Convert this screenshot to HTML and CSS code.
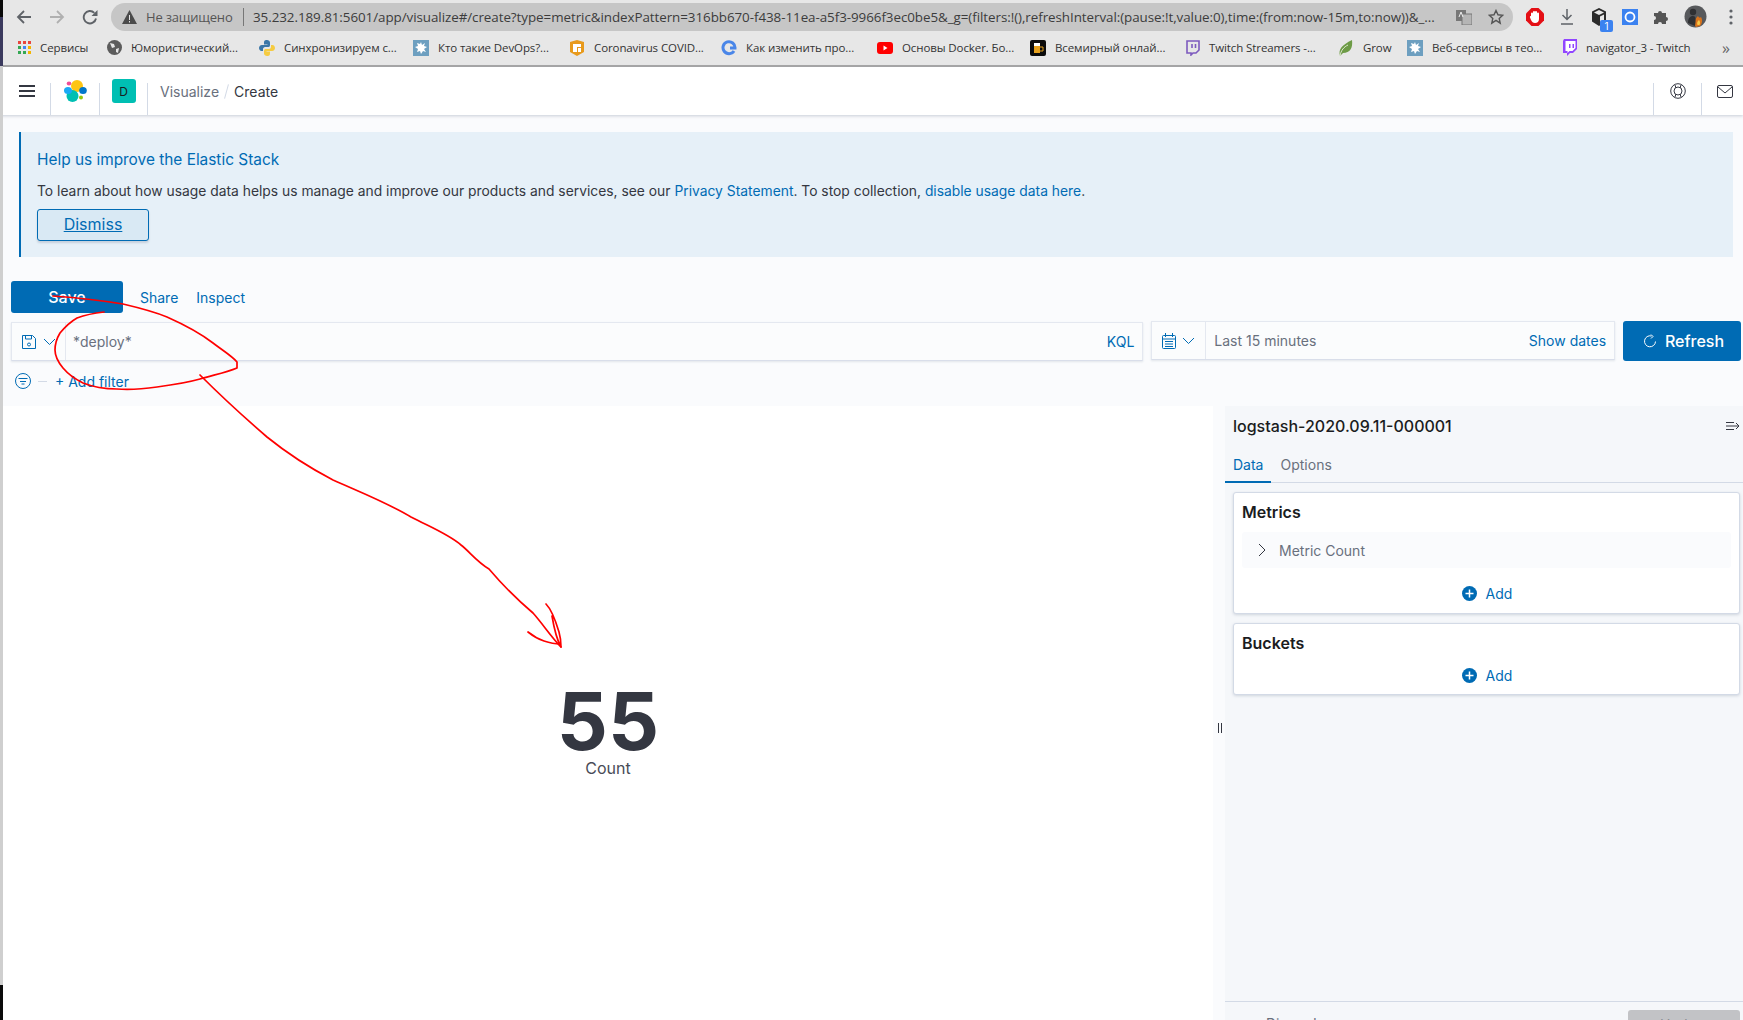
FILE: index.html
```html
<!DOCTYPE html>
<html lang="en">
<head>
    <meta charset="UTF-8">
    <title>Visualize - Kibana</title>
    <link rel="stylesheet" href="styles.css">
</head>
<body>
<div class="browser-bar">
    <div class="nav-btn">
        <svg width="16" height="16" viewBox="0 0 16 16" fill="none" stroke="#5f6368" stroke-width="1.800"><path d="M15 8H2M8 2L2 8l6 6"/></svg>
    </div>
    <div class="nav-btn nav-forward">
        <svg width="16" height="16" viewBox="0 0 16 16" fill="none" stroke="#b0b0b0" stroke-width="1.800"><path d="M1 8h13M8 2l6 6-6 6"/></svg>
    </div>
    <div class="nav-btn nav-reload">
        <svg width="16" height="16" viewBox="0 0 16 16" fill="none" stroke="#5f6368" stroke-width="1.900"><path d="M14 9.500A6.200 6.200 0 1 1 12.300 3.800"/><path d="M15.500 1v6H9.500z" fill="#5f6368" stroke="none"/></svg>
    </div>
    <div class="address-bar">
        <svg class="warn-icon" width="15" height="14" viewBox="0 0 15 14"><path d="M7.500 0L15 14H0z" fill="#4a4a4a"/><path d="M7 5h1v5H7zM7 11h1v1.500H7z" fill="#e4e4e4"/></svg>
        <span class="not-secure">Не защищено</span>
        <span class="address-url">35.232.189.81:5601/app/visualize#/create?type=metric&amp;indexPattern=316bb670-f438-11ea-a5f3-9966f3ec0be5&amp;_g=(filters:!(),refreshInterval:(pause:!t,value:0),time:(from:now-15m,to:now))&amp;_...</span>
        <svg class="translate-icon" width="16" height="16" viewBox="0 0 16 16"><rect x="0" y="1" width="10" height="11" fill="#777"/><rect x="6" y="5" width="10" height="11" fill="#b5b5b5" stroke="#777"/><path d="M3 8l2-5 2 5" stroke="#eee" fill="none"/></svg>
        <svg class="star-icon" width="16" height="16" viewBox="0 0 16 16" fill="none" stroke="#555" stroke-width="1.400"><path d="M8 1.500l2 4.300 4.700.5-3.500 3.200 1 4.600L8 11.300l-4.200 2.800 1-4.600L1.300 6.300 6 5.800z"/></svg>
    </div>
    <div class="ext-icons">
        <svg width="18" height="18" viewBox="0 0 18 18"><path d="M5.500 0h7L18 5.500v7L12.500 18h-7L0 12.500v-7z" fill="#e40f15"/><path d="M5 8V5.500a1 1 0 0 1 2 0V4a1 1 0 0 1 2 0 1 1 0 0 1 2 0v1.500a1 1 0 0 1 2 0V11c0 2.500-1.500 4-4 4-2 0-3-1-4-3L4 9.500c-.5-1 .5-1.800 1-1.500z" fill="#fff"/></svg>
        <svg width="16" height="18" viewBox="0 0 16 18" fill="none" stroke="#5f6368" stroke-width="1.500"><path d="M8 1v10M3.500 7L8 11.500 12.500 7M2 16h12"/></svg>
        <div class="ext-box">
            <svg width="16" height="18" viewBox="0 0 16 18"><path d="M8 0l7 3.500v10L8 18l-7-4.500v-10z" fill="#2b2b2b"/><path d="M8 2L3 4.500 8 7l5-2.500z" fill="#e7e7e7"/><path d="M9 8.500v6l4-2.500V6.500z" fill="#e7e7e7"/></svg>
            <span class="ext-badge">1</span>
        </div>
        <svg width="16" height="16" viewBox="0 0 16 16"><rect width="16" height="16" fill="#3b82f0"/><circle cx="8" cy="8" r="4.500" fill="none" stroke="#fff" stroke-width="1.800"/></svg>
        <svg width="16" height="16" viewBox="0 0 16 16"><path d="M1 4h4a2 2 0 0 1 4 0h4v4a2 2 0 0 1 0 4v3H9a2 2 0 0 0-4 0H1v-4a2 2 0 0 0 0-4z" fill="#555"/></svg>
        <svg width="23" height="23" viewBox="0 0 23 23"><circle cx="11.500" cy="11.500" r="11" fill="#57595c"/><path d="M12 22c-3-3-2-7 2-11 1 2 2 2 3 1 2 3 1 7-1 9z" fill="#d9731c"/><path d="M13.500 20c-1-2 0-4 1.500-5 1 1 1.500 3 .5 5z" fill="#f7c948"/><circle cx="9" cy="7" r="3.200" fill="#2f3033"/><path d="M4 18c0-5 2-7 5-7s3 3 2 10z" fill="#2f3033"/></svg>
        <svg class="dots-icon" width="4" height="16" viewBox="0 0 4 16" fill="#5f6368"><circle cx="2" cy="2" r="1.600"/><circle cx="2" cy="8" r="1.600"/><circle cx="2" cy="14" r="1.600"/></svg>
    </div>
</div>

<div class="bookmarks">
    <div class="bookmark">
        <svg width="13" height="13" viewBox="0 0 13 13"><path d="M0 0h3v3H0zM5 0h3v3H5zM10 0h3v3h-3z" fill="#e8453c"/><path d="M0 5h3v3H0z" fill="#34a853"/><path d="M5 5h3v3H5z" fill="#4285f4"/><path d="M10 5h3v3h-3z" fill="#f4b400"/><path d="M0 10h3v3H0zM5 10h3v3H5z" fill="#34a853"/><path d="M10 10h3v3h-3z" fill="#f4b400"/></svg>
        <span class="bm-text">Сервисы</span>
    </div>
    <div class="bookmark">
        <svg width="15" height="15" viewBox="0 0 15 15"><circle cx="7.500" cy="7.500" r="7.500" fill="#5c5c5c"/><path d="M3 3l4 1 1 3-3 1zM9 9l3-1-1 5-2-1z" fill="#e6e6e6"/></svg>
        <span class="bm-text">Юмористический...</span>
    </div>
    <div class="bookmark">
        <svg width="16" height="16" viewBox="0 0 16 16"><path d="M8 0C5 0 5 1.500 5 3v1.500h3.500V5H3C1 5 0 6.500 0 8s1 3 2.500 3H4V9c0-1 1-2 2-2h3.500C10.500 7 11 6 11 5V2.500C11 1 9.500 0 8 0z" fill="#3b77a8"/><path d="M8 16c3 0 3-1.500 3-3v-1.500H7.500V11H13c2 0 3-1.500 3-3s-1-3-2.500-3H12v2c0 1-1 2-2 2H6.500C5.500 9 5 10 5 11v2.500C5 15 6.500 16 8 16z" fill="#f5cb41"/></svg>
        <span class="bm-text">Синхронизируем с...</span>
    </div>
    <div class="bookmark">
        <svg width="16" height="16" viewBox="0 0 16 16"><rect width="16" height="16" fill="#6d9fc0"/><path d="M8 2l1 3 3-2-1 3 3 1-3 2 2 3-3-1-2 3-1-3-3 1 1-3-3-2 3-1-1-3 3 1z" fill="#fff"/></svg>
        <span class="bm-text">Кто такие DevOps?...</span>
    </div>
    <div class="bookmark">
        <svg width="16" height="16" viewBox="0 0 16 16"><path d="M1 2l7-2 7 2v10l-7 4-7-4z" fill="#e89a1c"/><path d="M4 4h8v3H8v5H4z" fill="#fff"/><path d="M9 8h3v4H9z" fill="#fff"/></svg>
        <span class="bm-text">Coronavirus COVID...</span>
    </div>
    <div class="bookmark">
        <svg width="16" height="16" viewBox="0 0 16 16" fill="none"><path d="M13 11A6 6 0 1 1 14 8H9" stroke="#4a86e8" stroke-width="3"/></svg>
        <span class="bm-text">Как изменить про...</span>
    </div>
    <div class="bookmark">
        <svg width="16" height="12" viewBox="0 0 16 12"><rect width="16" height="12" rx="3" fill="#f00"/><path d="M6.500 3.500v5l4-2.500z" fill="#fff"/></svg>
        <span class="bm-text">Основы Docker. Бо...</span>
    </div>
    <div class="bookmark">
        <svg width="16" height="16" viewBox="0 0 16 16"><rect width="16" height="16" rx="2" fill="#0c0c0c"/><path d="M4 6h6v7H4z" fill="#e7a11d"/><path d="M4 3h6v3H4z" fill="#fff"/><path d="M10 7h3v4h-3" fill="none" stroke="#e7a11d"/></svg>
        <span class="bm-text">Всемирный онлай...</span>
    </div>
    <div class="bookmark">
        <svg width="14" height="16" viewBox="0 0 14 16" fill="none" stroke="#7d5bbe" stroke-width="1.600"><path d="M1 1h12v9l-3 3H7l-2 2v-2H1zM6 4v4M9.500 4v4"/></svg>
        <span class="bm-text">Twitch Streamers -...</span>
    </div>
    <div class="bookmark">
        <svg width="16" height="18" viewBox="0 0 16 18"><path d="M2 17C0 10 4 6 14 1c1 8-2 13-9 13z" fill="#6d9b46"/><path d="M2 17C3 11 6 8 10 6" stroke="#dfe8d2" fill="none"/></svg>
        <span class="bm-text">Grow</span>
    </div>
    <div class="bookmark">
        <svg width="16" height="16" viewBox="0 0 16 16"><rect width="16" height="16" fill="#6d9fc0"/><path d="M8 2l1 3 3-2-1 3 3 1-3 2 2 3-3-1-2 3-1-3-3 1 1-3-3-2 3-1-1-3 3 1z" fill="#fff"/></svg>
        <span class="bm-text">Веб-сервисы в тео...</span>
    </div>
    <div class="bookmark">
        <svg width="15" height="17" viewBox="0 0 15 17"><path d="M2 0h13v10l-4 4H8l-3 3v-3H1V2z" fill="#9146ff"/><path d="M3.500 2h10v7l-3 3h-3l-2 2v-2h-2z" fill="#fff"/><path d="M7 5h1.500v4H7zM10.500 5H12v4h-1.500z" fill="#9146ff"/></svg>
        <span class="bm-text">navigator_3 - Twitch</span>
    </div>
    <span class="bm-more">»</span>
</div>

<div class="app">
    <header class="kbn-header">
        <div class="hd-cell hd-menu">
            <svg width="16" height="12" viewBox="0 0 16 12" fill="#343741"><rect y="0" width="16" height="2"/><rect y="5" width="16" height="2"/><rect y="10" width="16" height="2"/></svg>
        </div>
        <div class="hd-cell hd-logo">
            <svg width="24" height="24" viewBox="0 0 24 24">
                <circle cx="13" cy="7" r="6" fill="#fec514"/>
                <circle cx="8.500" cy="17" r="6" fill="#00bfb3"/>
                <ellipse cx="4" cy="11.500" rx="4" ry="3.500" fill="#1ba9f5"/>
                <ellipse cx="5" cy="4.500" rx="2.300" ry="2" fill="#f04e98"/>
                <ellipse cx="19" cy="11.500" rx="3.800" ry="3.500" fill="#0077cc"/>
                <circle cx="17" cy="18.500" r="2" fill="#93c90e"/>
            </svg>
        </div>
        <div class="hd-cell hd-space">
            <span class="space-avatar">D</span>
        </div>
        <nav class="crumbs">
            <span class="crumb-link">Visualize</span>
            <span class="crumb-sep"></span>
            <span class="crumb-last">Create</span>
        </nav>
        <div class="hd-cell hd-right">
            <svg width="16" height="16" viewBox="0 0 16 16" fill="none" stroke="#343741"><circle cx="8" cy="8" r="7.300"/><circle cx="8" cy="8" r="4"/><path d="M5 2l1 3M11 2l-1 3M5 14l1-3M11 14l-1-3"/></svg>
        </div>
        <div class="hd-cell hd-right">
            <svg width="16" height="13" viewBox="0 0 16 13" fill="none" stroke="#343741"><rect x=".5" y=".5" width="15" height="12" rx="1.500"/><path d="M1 2l7 6 7-6"/></svg>
        </div>
    </header>

    <section class="banner">
        <h3 class="banner-title">Help us improve the Elastic Stack</h3>
        <p class="banner-text">To learn about how usage data helps us manage and improve our products and services, see our <a class="link">Privacy Statement</a>. To stop collection, <a class="link">disable usage data here</a>.</p>
        <button type="button" class="dismiss-btn">Dismiss</button>
    </section>

    <div class="top-menu">
        <button type="button" class="save-btn">Save</button>
        <a class="link menu-link">Share</a>
        <a class="link menu-link">Inspect</a>
    </div>

    <div class="query-row">
        <div class="query-bar">
            <div class="prepend">
                <svg width="14" height="14" viewBox="0 0 14 14" fill="none" stroke="#006bb4"><path d="M.5.500h10l3 3v10H.5z"/><path d="M3.500.500v3.500h6v-3.500"/><circle cx="7" cy="9.500" r="1.500"/></svg>
                <svg class="chev" width="13" height="8" viewBox="0 0 13 8" fill="none" stroke="#006bb4"><path d="M1 1l5.500 5.500L12 1"/></svg>
            </div>
            <span class="query-text">*deploy*</span>
            <a class="link kql">KQL</a>
        </div>
        <div class="date-bar">
            <div class="prepend date-prepend">
                <svg width="14" height="16" viewBox="0 0 14 16" fill="none" stroke="#006bb4"><rect x=".5" y="2.500" width="13" height="13" rx="1"/><path d="M.5 6h13M3.500 0v4M10.500 0v4M3 8.500h8M3 11h8M3 13.500h8" /></svg>
                <svg class="chev" width="13" height="8" viewBox="0 0 13 8" fill="none" stroke="#006bb4"><path d="M1 1l5.500 5.500L12 1"/></svg>
            </div>
            <span class="date-text">Last 15 minutes</span>
            <a class="link show-dates">Show dates</a>
        </div>
        <button type="button" class="refresh-btn">
            <svg width="14" height="14" viewBox="0 0 14 14" fill="none" stroke="#fff"><path d="M12.500 7.500A5.500 5.500 0 1 1 8.500 2"/><path d="M8 .5l2 2-2 2"/></svg>
            Refresh
        </button>
    </div>

    <div class="filter-row">
        <svg width="16" height="16" viewBox="0 0 16 16" fill="none" stroke="#006bb4"><circle cx="8" cy="8" r="7.500"/><path d="M3.500 5.500h9M5 8.500h6M6.500 11h3"/></svg>
        <span class="filter-dash"></span>
        <a class="link add-filter">+ Add filter</a>
    </div>

    <main class="workspace">
        <div class="chart">
            <div class="metric-value">55</div>
            <div class="metric-label">Count</div>
        </div>
        <div class="resizer"><span class="resizer-grip"></span></div>
        <aside class="side-panel">
            <div class="panel-head">
                <span class="index-name">logstash-2020.09.11-000001</span>
                <svg width="14" height="12" viewBox="0 0 14 12" fill="none" stroke="#343741"><path d="M0 2.500h8M0 6h13M0 9.500h8M10 3l3 3-3 3"/></svg>
            </div>
            <div class="tabs">
                <span class="tab tab-active">Data</span>
                <span class="tab">Options</span>
            </div>
            <div class="panel-body">
                <div class="card card-metrics">
                    <h4 class="card-title">Metrics</h4>
                    <div class="agg-row">
                        <svg width="8" height="14" viewBox="0 0 8 14" fill="none" stroke="#343741"><path d="M1 1l6 6-6 6"/></svg>
                        <span class="agg-name">Metric Count</span>
                    </div>
                    <div class="add-row">
                        <svg width="15" height="15" viewBox="0 0 15 15"><circle cx="7.500" cy="7.500" r="7.500" fill="#006bb4"/><path d="M3.500 7.500h8M7.500 3.500v8" stroke="#fff" stroke-width="1.500"/></svg>
                        <a class="link">Add</a>
                    </div>
                </div>
                <div class="card card-buckets">
                    <h4 class="card-title">Buckets</h4>
                    <div class="add-row add-row-tight">
                        <svg width="15" height="15" viewBox="0 0 15 15"><circle cx="7.500" cy="7.500" r="7.500" fill="#006bb4"/><path d="M3.500 7.500h8M7.500 3.500v8" stroke="#fff" stroke-width="1.500"/></svg>
                        <a class="link">Add</a>
                    </div>
                </div>
            </div>
            <div class="panel-foot">
                <span class="discard">Discard</span>
                <button type="button" class="update-btn">Update</button>
            </div>
        </aside>
    </main>
</div>

<!-- sliver of the window behind, down the left edge of the screenshot -->
<div class="window-edge">
    <span class="edge-top"></span>
    <span class="edge-navy"></span>
    <span class="edge-grey"></span>
    <span class="edge-bottom"></span>
</div>

<!-- red pen marks drawn over the screenshot -->
<svg class="scribble" width="1743" height="1020" viewBox="0 0 1743 1020" fill="none" stroke="#f00" stroke-width="1.700" stroke-linecap="round" stroke-linejoin="round">
    <path d="M53 296C80 298 105 301 123 304C140 308 155 312 167 317C185 325 200 333 213 343C222 350 232 356 237 362L237 368C225 373 213 375 200 379C186 383 172 385 157 387C143 389 130 390 117 389C105 389 93 387 83 383C75 379 68 374 63 368C58 362 55 356 55 350C55 344 57 338 60 333C65 327 70 322 77 318C85 315 95 313 104 312"/>
    <path d="M200 375C220 395 245 418 267 437C288 454 310 468 333 480C360 492 388 503 411 517C430 527 448 534 461 545C470 552 476 561 489 569C500 582 520 602 533 613C542 623 552 638 561 647"/>
    <path d="M546 604C552 610 556 622 559 632C561 639 561 644 561 647C557 640 554 628 552 616"/>
    <path d="M528 632C533 636 538 639 544 641C550 643 556 644 560 644"/>
</svg>
</body>
</html>
```

FILE: styles.css
```css
* {
    box-sizing: border-box;
}
html, body {
    margin: 0;
    height: 1020px;
    overflow: hidden;
}
body {
    position: relative;
    font-family: Inter, "Liberation Sans", sans-serif;
    font-size: 14px;
    color: #343741;
    background: #fff;
}
h3, h4, p {
    margin: 0;
}
button {
    font-family: inherit;
}
.link {
    color: #006bb4;
}

/* browser chrome */
.browser-bar {
    display: flex;
    align-items: center;
    height: 33px;
    padding-left: 16px;
    background: #e7e7e7;
}
.nav-btn {
    display: flex;
    width: 16px;
    margin-right: 17px;
}
.nav-reload {
    margin-right: 13px;
}
.address-bar {
    display: flex;
    align-items: center;
    width: 1402px;
    height: 28px;
    padding: 0 10px 0 11px;
    border-radius: 14px;
    background: #c6c6c6;
    font-family: "Open Sans", "Liberation Sans", sans-serif;
    font-size: 13px;
    color: #3c3c3c;
    white-space: nowrap;
}
.warn-icon {
    flex: none;
    margin-right: 9px;
}
.not-secure {
    flex: none;
    width: 98px;
    border-right: 1px solid #777;
    color: #555;
    letter-spacing: -0.2px;
}
.address-url {
    flex: none;
    width: 1187px;
    margin-left: 9px;
    overflow: hidden;
    font-size: 13.4px;
    letter-spacing: -0.06px;
}
.translate-icon {
    flex: none;
    margin-left: 16px;
}
.star-icon {
    flex: none;
    margin-left: 16px;
}
.ext-icons {
    display: flex;
    align-items: center;
    gap: 15px;
    margin-left: 13px;
}
.ext-box {
    position: relative;
    display: flex;
    margin-left: 1px;
}
.ext-badge {
    position: absolute;
    right: -6px;
    bottom: -6px;
    width: 13px;
    height: 12px;
    border-radius: 2px;
    background: #3b82f0;
    color: #fff;
    font-size: 10px;
    line-height: 12px;
    text-align: center;
}
.dots-icon {
    margin-left: 7px;
}
.bookmarks {
    display: grid;
    grid-template-columns: 89px 152px 154px 156px 152px 156px 153px 156px 152px 69px 155px 160px auto;
    align-items: center;
    height: 34px;
    padding: 0 0 3px 18px;
    border-bottom: 2px solid #a6a6a6;
    background: #e7e7e7;
    font-family: "Open Sans", "Liberation Sans", sans-serif;
    font-size: 11.5px;
    color: #333;
    white-space: nowrap;
}
.bookmark {
    display: flex;
    align-items: center;
    gap: 9px;
    overflow: hidden;
}
.bm-text {
    letter-spacing: -0.1px;
}
.bm-more {
    font-size: 16px;
    color: #666;
}

/* kibana */
.app {
    display: flex;
    flex-direction: column;
    height: 953px;
    background: #fafbfd;
}
.kbn-header {
    display: flex;
    align-items: flex-end;
    flex: none;
    height: 48px;
    background: #fff;
    box-shadow: 0 1px 3px rgba(152, 162, 179, 0.5);
    position: relative;
}
.hd-cell {
    display: flex;
    align-items: center;
    justify-content: center;
    height: 32px;
    border-right: 1px solid #d3dae6;
    padding-bottom: 16px;
}
.hd-menu {
    width: 51px;
    padding-left: 4px;
}
.hd-logo {
    width: 49px;
    padding-left: 1px;
}
.hd-space {
    width: 48px;
}
.space-avatar {
    display: flex;
    align-items: center;
    justify-content: center;
    width: 24px;
    height: 24px;
    border-radius: 3px;
    background: #00bfb3;
    font-size: 12px;
    color: #1a1c21;
}
.crumbs {
    display: flex;
    flex: 1;
    align-items: center;
    gap: 7px;
    height: 47px;
    padding-left: 12px;
    font-size: 14px;
}
.crumb-link {
    color: #69707d;
}
.crumb-sep {
    width: 1px;
    height: 15px;
    background: #d3dae6;
    transform: rotate(15deg);
}
.crumb-last {
    color: #343741;
}
.hd-right {
    width: 48px;
    border-right: none;
    border-left: 1px solid #d3dae6;
}
.hd-right + .hd-right {
    width: 42px;
    padding-left: 15px;
    justify-content: flex-start;
}
.banner {
    flex: none;
    height: 125px;
    margin: 17px 10px 0 19px;
    padding: 18px 16px 0 16px;
    border-left: 2px solid #006bb4;
    background: #e6f0f8;
}
.banner-title {
    font-size: 15.4px;
    font-weight: 400;
    line-height: 20px;
    color: #006bb4;
}
.banner-text {
    margin-top: 11px;
    font-size: 13.85px;
    line-height: 21px;
}
.dismiss-btn {
    display: block;
    width: 112px;
    height: 32px;
    margin-top: 7px;
    padding: 0 0 2px;
    border: 1px solid #006bb4;
    border-radius: 3px;
    background: #d9e9f4;
    box-shadow: 0 2px 2px rgba(152, 162, 179, 0.4);
    font-size: 16px;
    color: #006bb4;
    text-decoration: underline;
}
.top-menu {
    display: flex;
    align-items: center;
    flex: none;
    height: 32px;
    margin: 24px 0 0 11px;
}
.save-btn {
    width: 112px;
    height: 32px;
    border: none;
    border-radius: 3px;
    background: #006bb4;
    font-size: 16px;
    font-weight: 500;
    color: #fff;
}
.menu-link {
    margin-left: 17px;
    margin-right: 1px;
}
.query-row {
    display: flex;
    flex: none;
    height: 40px;
    margin: 8px 2px 0 11px;
    gap: 8px;
}
.query-bar, .date-bar {
    display: flex;
    align-items: center;
    height: 39px;
    border: 1px solid #e4e8f0;
    border-bottom-color: #d9deea;
    box-shadow: 0 1px 2px rgba(152, 162, 179, 0.25);
    background: #fbfcfd;
}
.query-bar {
    width: 1133px;
    margin-top: 1px;
}
.date-bar {
    width: 464px;
}
.prepend {
    display: flex;
    align-items: center;
    gap: 7px;
    width: 54px;
    height: 100%;
    padding-left: 10px;
    border-right: 1px solid #e4e8f0;
}
.date-prepend {
    gap: 6px;
}
.query-text {
    flex: 1;
    padding-left: 7px;
    color: #69707d;
}
.kql {
    margin-right: 8px;
}
.date-text {
    flex: 1;
    padding-left: 8px;
    color: #69707d;
}
.show-dates {
    margin-right: 8px;
}
.refresh-btn {
    display: flex;
    align-items: center;
    justify-content: center;
    gap: 8px;
    width: 118px;
    height: 40px;
    padding: 0 0 0 3px;
    border: none;
    border-radius: 3px;
    background: #006bb4;
    font-size: 16px;
    font-weight: 500;
    color: #fff;
}
.filter-row {
    display: flex;
    align-items: center;
    flex: none;
    height: 24px;
    margin: 8px 0 0 15px;
}
.filter-dash {
    width: 9px;
    height: 1px;
    margin: 0 8px 0 7px;
    background: #d3dae6;
}
.workspace {
    display: flex;
    flex: 1;
    min-height: 0;
    margin-top: 13px;
    padding-left: 3px;
}
.chart {
    display: flex;
    flex: 1;
    flex-direction: column;
    align-items: center;
    padding-top: 271px;
    background: #fff;
}
.metric-value {
    font-size: 80px;
    font-weight: 700;
    line-height: 88px;
    color: #343741;
}
.metric-label {
    margin-top: -7px;
    font-size: 16px;
    line-height: 20px;
    color: #494c57;
}
.resizer {
    position: relative;
    flex: none;
    width: 12px;
    background: #fafbfd;
}
.resizer-grip {
    position: absolute;
    left: 5px;
    top: 317px;
    width: 4px;
    height: 10px;
    border-left: 1px solid #343741;
    border-right: 1px solid #343741;
}
.side-panel {
    display: flex;
    flex-direction: column;
    flex: none;
    width: 518px;
    background: #f5f7fa;
}
.panel-head {
    display: flex;
    align-items: center;
    justify-content: space-between;
    flex: none;
    height: 40px;
    padding: 0 3px 0 8px;
}
.index-name {
    font-size: 16px;
    font-weight: 500;
    color: #1a1c21;
}
.tabs {
    display: flex;
    flex: none;
    height: 37px;
    border-bottom: 1px solid #d3dae6;
}
.tab {
    padding: 10px 8px 0;
    color: #69707d;
}
.tab-active {
    border-bottom: 2px solid #006bb4;
    height: 37px;
    margin-right: 1px;
    color: #006bb4;
}
.panel-body {
    flex: 1;
    padding: 9px 3px 0 8px;
}
.card {
    border: 1px solid #d3dae6;
    border-radius: 3px;
    background: #fff;
    box-shadow: 0 1px 3px rgba(152, 162, 179, 0.4);
    padding: 0 8px;
}
.card-metrics {
    height: 122px;
}
.card-buckets {
    height: 72px;
    margin-top: 9px;
}
.card-title {
    margin-top: 9px;
    font-size: 16px;
    font-weight: 600;
    line-height: 20px;
    color: #1a1c21;
}
.agg-row {
    display: flex;
    align-items: center;
    gap: 13px;
    height: 36px;
    margin-top: 10px;
    padding-left: 16px;
    border-radius: 3px;
    background: #fafbfd;
}
.agg-name {
    color: #69707d;
}
.add-row {
    display: flex;
    align-items: center;
    justify-content: center;
    gap: 9px;
    height: 20px;
    margin-top: 15px;
    padding-left: 1px;
}
.add-row-tight {
    margin-top: 12px;
}
.panel-foot {
    display: flex;
    justify-content: space-between;
    flex: none;
    height: 19px;
    padding-left: 41px;
    border-top: 1px solid #d3dae6;
}
.discard {
    margin-top: 12px;
    color: #69707d;
    line-height: 20px;
}
.update-btn {
    width: 112px;
    height: 40px;
    margin: 8px 3px 0 0;
    padding: 0 0 12px;
    border: none;
    border-radius: 3px;
    background: #c2c3c6;
    font-size: 14px;
    color: #8a8c92;
}

/* overlays */
.window-edge {
    position: absolute;
    left: 0;
    top: 0;
    display: flex;
    flex-direction: column;
    width: 3px;
    height: 1020px;
}
.edge-top {
    height: 17px;
    background: #0a0a0a;
}
.edge-navy {
    height: 49px;
    background: #3b3a5e;
}
.edge-grey {
    flex: 1;
    background: #cfcfcf;
}
.edge-bottom {
    height: 35px;
    background: #0a0a0a;
}
.scribble {
    position: absolute;
    left: 0;
    top: 0;
    pointer-events: none;
}
```
